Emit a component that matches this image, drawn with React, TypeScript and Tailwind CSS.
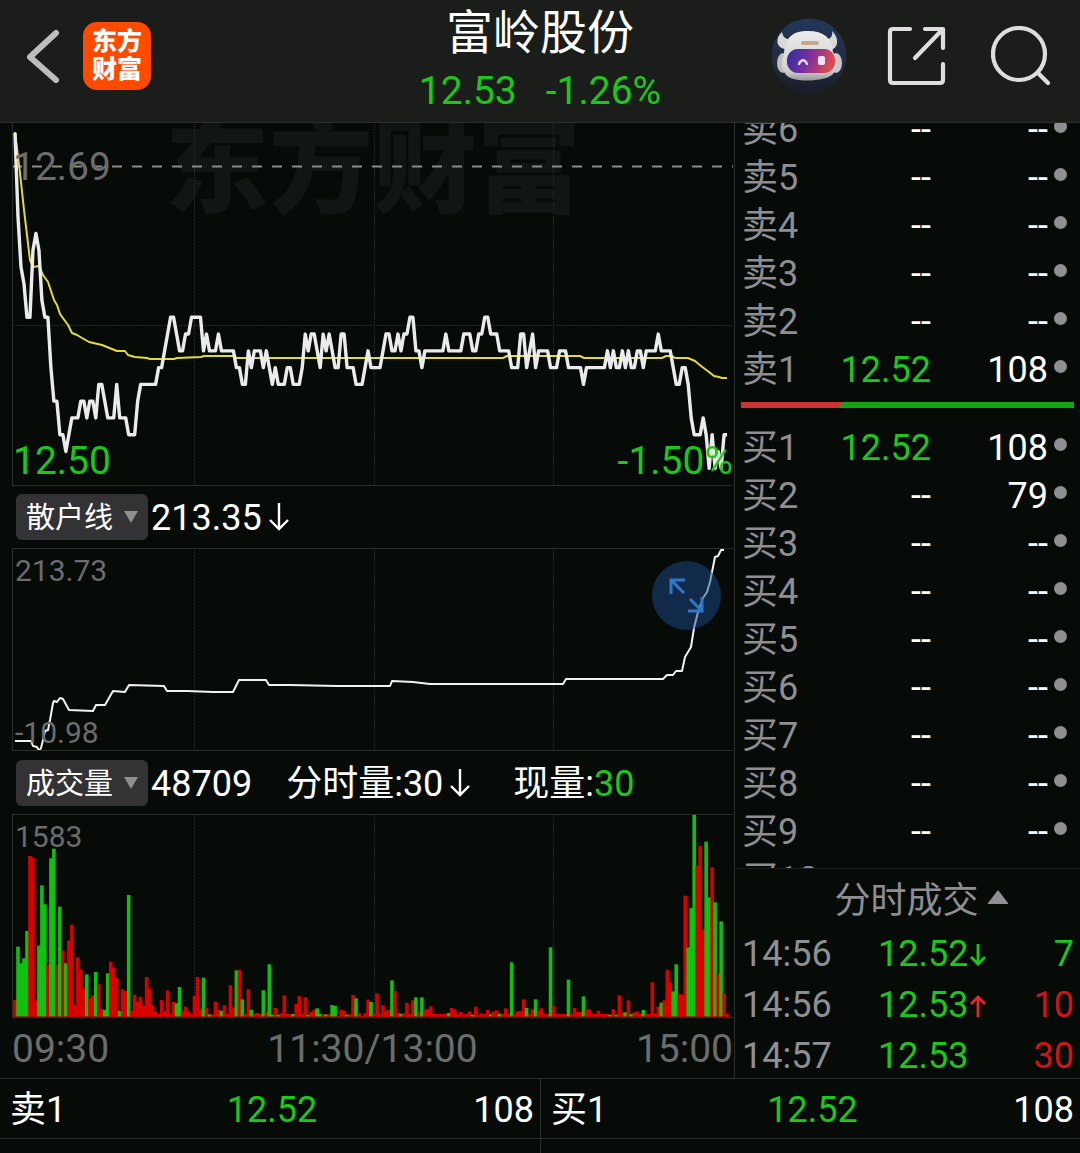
import type { ReactNode } from "react";

const STEP = 2.992;
const minuteX = (i: number) => 2 + i * STEP;

// Last price for each minute, in cents above 12.00
const prices = [
  71, 66, 63, 62, 60, 60, 64, 65, 64, 61, 60, 60, 57, 55, 55, 53, 53, 52, 53, 54,
  54, 54, 55, 55, 54, 55, 55, 54, 56, 56, 55, 54, 54, 54, 56, 54, 54, 54, 53, 53,
  53, 55, 56, 56, 56, 56, 56, 56, 57, 57, 58, 59, 60, 60, 59, 58, 58, 59, 59, 60,
  60, 60, 60, 58, 59, 58, 58, 58, 59, 58, 58, 58, 58, 58, 57, 57, 56, 56, 58, 57,
  58, 58, 58, 57, 58, 57, 56, 57, 56, 56, 56, 57, 57, 56, 56, 56, 57, 59, 58, 59,
  59, 58, 57, 59, 58, 59, 58, 57, 57, 59, 59, 57, 57, 57, 56, 56, 56, 57, 58, 57,
  57, 57, 57, 58, 59, 59, 58, 58, 59, 58, 59, 59, 60, 60, 58, 58, 57, 58, 58, 58,
  58, 58, 58, 58, 59, 58, 58, 58, 58, 58, 59, 59, 59, 58, 58, 59, 59, 60, 60, 59,
  59, 59, 58, 58, 58, 58, 57, 57, 57, 59, 59, 57, 58, 59, 57, 58, 58, 58, 58, 57,
  57, 57, 58, 58, 58, 57, 57, 57, 57, 57, 56, 57, 57, 57, 57, 57, 57, 57, 58, 57,
  58, 57, 57, 58, 57, 58, 57, 57, 58, 58, 57, 58, 58, 58, 58, 59, 58, 58, 58, 58,
  57, 56, 56, 57, 57, 56, 54, 53, 53, 53, 54, 53, 51, 53, 51, 52, 51, 53, 53,
];

// Volume for each minute, negative when the minute closed lower
const volumes = [
  51, -211, -161, -176, -258, 483, 478, 50, -214, -395, -338, 158, -476, -505,
  158, -331, 200, -161, 229, 277, 36, 179, 141, 86, -128, 56, 65, -135, 99, 24,
  -21, -131, 166, 149, 117, -18, 83, 78, -366, 19, 66, 47, 60, 33, 120, 86, 36,
  18, 9, 51, 18, 80, 9, 45, -41, -90, 18, 31, 16, 9, 64, 120, 23, -118, 28, -8,
  8, 46, 21, -19, 35, 9, 95, 29, -140, 142, -53, 9, 83, -22, 9, 12, 9, -80, 16,
  -158, -7, 27, -7, 11, 65, 9, 9, -9, 40, 62, 9, 59, -7, 15, 21, -26, -9, 9, -8,
  9, -36, -33, 3, 22, 19, -7, 9, 66, -56, 12, 3, 11, 52, -45, 9, 71, 8, 35, 18,
  22, -110, 78, 12, -10, 11, 43, 9, 50, -59, 17, -59, 22, 24, 32, 9, 9, 9, 9, 9,
  -12, 27, 23, 9, 15, 8, 9, 17, -7, 31, 8, 11, 9, 22, -8, 16, 20, -10, 9, 26, 9,
  -164, 9, 17, 18, 53, -27, 9, 23, -53, 19, 26, 9, 9, -209, 34, 9, 9, 9, 9, -112,
  9, 27, 15, 15, -62, 23, 23, 9, 9, 19, 9, 9, 9, -7, 24, -7, 65, 14, -14, 50, -9,
  14, 17, 9, -21, 9, 9, 104, 9, 31, -43, 50, 142, 104, -77, -158, 69, 67, 364,
  -209, -327, -606, 455, 513, 263, -526, -359, 449, -344, 131, -287, 73, 10,
];

const averageLine =
  "2,9 7,50 11,87 17,137 20,144 26,143 30,152 35,159 41,177 44,182 47,191 55,202 59,210 64,212 76,219 89,222 104,228 112,228 115,232 122,234 134,235 137,236 161,236 164,235 188,234 191,233 220,233 224,235 490,235 494,233 567,233 571,235 649,235 653,233 659,233 662,235 675,235 682,238 688,243 696,249 701,253 706,254 709,255 714,255";

const retailLine =
  "2,192 18,192 20,197 24,198 26,202 28,199 30,191 32,182 35,181 37,171 40,154 41,152 44,153 47,149 50,150 56,161 80,162 83,156 92,156 100,142 112,143 116,136 151,137 154,142 174,142 200,143 220,143 226,131 253,131 256,136 277,136 324,137 377,137 379,132 400,133 417,135 490,135 499,135 524,135 550,135 553,130 650,130 654,126 660,126 663,122 669,122 672,108 678,98 681,79 685,63 690,49 694,43 697,33 702,8 705,7 708,1 711,1";

const sells = [
  ["卖6", "--", "--"],
  ["卖5", "--", "--"],
  ["卖4", "--", "--"],
  ["卖3", "--", "--"],
  ["卖2", "--", "--"],
  ["卖1", "12.52", "108"],
];

const buys = [
  ["买1", "12.52", "108"],
  ["买2", "--", "79"],
  ["买3", "--", "--"],
  ["买4", "--", "--"],
  ["买5", "--", "--"],
  ["买6", "--", "--"],
  ["买7", "--", "--"],
  ["买8", "--", "--"],
  ["买9", "--", "--"],
  ["买10", "--", "--"],
];

const trades = [
  { time: "14:56", price: "12.52", dir: "down", qty: "7", color: "text-[#1ac81a]" },
  { time: "14:56", price: "12.53", dir: "up", qty: "10", color: "text-[#d01414]" },
  { time: "14:57", price: "12.53", dir: "", qty: "30", color: "text-[#d01414]" },
];

function Grid({ height }: { height: number }) {
  return (
    <g stroke="#242725" strokeWidth="1" strokeDasharray="2 1">
      {[181.5, 361.5, 540.5].map((x) => (
        <line key={x} x1={x} x2={x} y1="0" y2={height} />
      ))}
    </g>
  );
}

function Arrow({ className }: { className: string }) {
  return (
    <svg viewBox="0 0 20 30" className={className} fill="none" stroke="currentColor" strokeWidth="2.4">
      <path d="M10 1V27M1 18L10 27L19 18" />
    </svg>
  );
}

function TickArrow({ up = false }: { up?: boolean }) {
  return (
    <svg
      viewBox="0 0 16 24"
      className={up ? "h-6 w-4 text-[#e02a2a]" : "h-6 w-4"}
      fill="none"
      stroke="currentColor"
      strokeWidth="2.8"
    >
      {up ? <path d="M8 23V3M1 10L8 3L15 10" /> : <path d="M8 1V21M1 14L8 21L15 14" />}
    </svg>
  );
}

function IndicatorSelect({ name, value }: { name: string; value: string }) {
  return (
    <div className="relative shrink-0">
      <select
        aria-label={name}
        defaultValue={value}
        className="block h-[46px] w-[132px] appearance-none rounded-md bg-[#333335] pt-[3px] pl-[10px] text-[29px] text-white"
      >
        <option>散户线</option>
        <option>成交量</option>
      </select>
      <svg viewBox="0 0 14 12" className="pointer-events-none absolute top-[17px] right-[10px] h-3 w-[14px]">
        <path d="M0 0H14L7 12Z" fill="#8e8e93" />
      </svg>
    </div>
  );
}

function BookTable({ label, rows }: { label: string; rows: string[][] }) {
  return (
    <table aria-label={label} className="w-full table-fixed border-collapse text-4xl">
      <tbody>
        {rows.map(([name, price, qty]) => (
          <tr key={name} className="h-12 leading-[46px]">
            <th className="w-[72px] p-0 pt-[2px] pl-[7px] text-left font-normal whitespace-nowrap text-[#8e8e93]">
              {name}
            </th>
            <td className={price === "--" ? "p-0 pt-[2px] text-right text-white" : "p-0 pt-[2px] text-right text-[#1ac81a]"}>
              {price}
            </td>
            <td className="w-[117px] p-0 pt-[2px] text-right text-white">{qty}</td>
            <td className="w-8 p-0 pb-[5px]">
              <span className="ml-[6px] block size-[13px] rounded-full bg-[#8e8e93]" />
            </td>
          </tr>
        ))}
      </tbody>
    </table>
  );
}

function QuoteCell({ side, children }: { side: string; children?: ReactNode }) {
  return (
    <div className="grid h-[59px] grid-cols-3 items-center pt-[3px] pr-[6px] pl-[10px] text-4xl">
      <span>{side}</span>
      <span className="text-center text-[#1ac81a]">12.52</span>
      <span className="text-right">{children}</span>
    </div>
  );
}

function Header() {
  return (
    <header className="grid h-[123px] grid-cols-[1fr_auto_1fr] border-b border-[#2c2e2c] bg-[#1a1d1a]">
      <div className="flex items-start pt-[22px] pl-[26px]">
        <button aria-label="返回" className="mt-[7px]">
          <svg viewBox="0 0 34 54" className="h-[54px] w-[34px]" fill="none" stroke="#bdbdbd" strokeWidth="6" strokeLinecap="round">
            <path d="M30 4L4 28L30 51" strokeLinejoin="round" />
          </svg>
        </button>
        <a
          href="#"
          aria-label="东方财富"
          className="ml-[23px] flex size-[68px] flex-col items-center justify-center rounded-[14px] bg-[#ff4a00] text-[25px] leading-[28px] font-black text-white"
        >
          <span>东方</span>
          <span>财富</span>
        </a>
      </div>
      <div className="text-center">
        <h1 className="pt-1 text-[47px] leading-[58px] text-white">富岭股份</h1>
        <p className="flex justify-center gap-[29px] text-[39px] leading-[58px] text-[#1ac81a]">
          <span>12.53</span>
          <span>-1.26%</span>
        </p>
      </div>
      <div className="flex items-start justify-end pt-[18px] pr-[29px]">
        <button aria-label="智能助手">
          <svg viewBox="0 0 76 76" className="size-[76px]">
            <defs>
              <linearGradient id="sky" x1="0" y1="0" x2="0" y2="1">
                <stop offset="0" stopColor="#22375a" />
                <stop offset="0.6" stopColor="#232b3e" />
                <stop offset="1" stopColor="#181c2a" />
              </linearGradient>
              <linearGradient id="visor" x1="0" y1="0" x2="1" y2="0.2">
                <stop offset="0" stopColor="#2a2f9c" />
                <stop offset="0.5" stopColor="#7b2f9e" />
                <stop offset="1" stopColor="#dc4a50" />
              </linearGradient>
              <linearGradient id="shell" x1="0" y1="0" x2="0" y2="1">
                <stop offset="0" stopColor="#ececec" />
                <stop offset="0.8" stopColor="#d2d0d0" />
                <stop offset="1" stopColor="#9a9698" />
              </linearGradient>
            </defs>
            <circle cx="38" cy="38" r="37.5" fill="url(#sky)" />
            <path d="M11 14C4 20 5 30 14 31L22 21C14 22 12 19 11 14Z" fill="#d8d8da" />
            <path d="M61 13C68 19 68 30 60 32L53 21C60 22 62 18 61 13Z" fill="#d8d8da" />
            <ellipse cx="12" cy="45" rx="6" ry="10" fill="#bdbcc0" />
            <ellipse cx="65" cy="45" rx="6" ry="10" fill="#c9c7ca" />
            <path d="M13 36C14 20 21 13 37 13C53 13 61 20 62 34C67 42 67 50 62 56C55 64 22 65 15 57C10 50 10 42 13 36Z" fill="url(#shell)" />
            <rect x="30" y="23" width="18" height="4" rx="2" fill="#c9a58a" />
            <rect x="16" y="31" width="48" height="24" rx="11" fill="url(#visor)" />
            <path d="M28 46C30 41 34 41 36 46" fill="none" stroke="#dcdcf4" strokeWidth="2.4" strokeLinecap="round" />
            <rect x="47" y="38" width="7" height="9" rx="2" fill="#f0e4f4" />
          </svg>
        </button>
        <button aria-label="分享" className="mt-2 ml-10">
          <svg viewBox="0 0 60 60" className="size-[60px]" fill="none" stroke="#dedede" strokeWidth="4.2" strokeLinecap="round" strokeLinejoin="round">
            <path d="M23 3H6Q3 3 3 6V54Q3 57 6 57H53Q56 57 56 54V38" />
            <path d="M38 3H56V22M55 4L28 32" />
          </svg>
        </button>
        <button aria-label="搜索" className="mt-2 ml-11">
          <svg viewBox="0 0 60 60" className="size-[60px]" fill="none" stroke="#dedede" strokeWidth="4.2" strokeLinecap="round">
            <circle cx="28" cy="28" r="26" />
            <path d="M47 47L57 57" />
          </svg>
        </button>
      </div>
    </header>
  );
}

function PriceChart() {
  const points = prices
    .map((p, i) => `${minuteX(i)},${194.3 + (60 - p) * 16.77}`)
    .join(" ");

  return (
    <div className="relative overflow-hidden border-b border-l border-[#2c2e2c] text-[39px] leading-none">
      <div className="absolute inset-x-0 -top-2 text-center text-[104px] leading-[110px] font-black text-[#111513]">
        东方财富
      </div>
      <svg viewBox="0 0 720 362" preserveAspectRatio="none" className="relative block h-[362px] w-full">
        <Grid height={362} />
        <line x1="0" x2="720" y1="202.5" y2="202.5" stroke="#242725" strokeDasharray="2 1" />
        <line x1="-1" x2="720" y1="43.5" y2="43.5" stroke="#8c8c8c" strokeWidth="2" strokeDasharray="10 10" />
        <polyline points={averageLine} fill="none" stroke="#e6d93c" strokeWidth="2" strokeLinejoin="round" />
        <polyline points={points} fill="none" stroke="#ebebeb" strokeWidth="3.4" strokeLinejoin="round" />
      </svg>
      <span className="absolute top-[25px] left-0 text-[#6c6c6c]">12.69</span>
      <span className="absolute bottom-1 left-0 text-[#1ac81a]">12.50</span>
      <span className="absolute right-0 bottom-1 text-[#1ac81a]">-1.50%</span>
    </div>
  );
}

function RetailChart() {
  return (
    <div className="relative border-y border-l border-[#2c2e2c] text-[30px] leading-none text-[#6c6c6c]">
      <svg viewBox="0 0 720 201" preserveAspectRatio="none" className="block h-[201px] w-full">
        <Grid height={201} />
        <polyline points={retailLine} fill="none" stroke="#f2f2f2" strokeWidth="2" strokeLinejoin="round" />
      </svg>
      <span className="absolute top-[7px] left-[2px]">213.73</span>
      <span className="absolute bottom-[2px] left-[2px]">-10.98</span>
      <button
        aria-label="放大"
        className="absolute top-3 right-3 size-[69px] rounded-full bg-[#1c4a8a]/50"
      >
        <svg viewBox="0 0 69 69" className="size-full" fill="none" stroke="#2f78c8" strokeWidth="3">
          <path d="M33 19H19V33M19 19L32 32" />
          <path d="M50 36V50H36M38 38L50 50" />
        </svg>
      </button>
    </div>
  );
}

function VolumeChart() {
  return (
    <div className="relative border-y border-l border-[#2c2e2c] text-[30px] leading-none text-[#6c6c6c]">
      <svg viewBox="0 0 720 202" preserveAspectRatio="none" className="block h-[202px] w-full">
        <Grid height={202} />
        {volumes.map((v, i) => (
          <rect
            key={i}
            x={minuteX(i) - 1.8}
            y={202 - Math.abs(v) / 3}
            width="3.6"
            height={Math.abs(v) / 3}
            fill={v > 0 ? "#f00000" : "#10d810"}
            opacity="0.88"
          />
        ))}
        <line x1="0" x2="714" y1="201.5" y2="201.5" stroke="#a00000" opacity="0.6" />
      </svg>
      <span className="absolute top-[7px] left-[2px]">1583</span>
    </div>
  );
}

function OrderBook() {
  return (
    <aside className="flex w-[346px] shrink-0 flex-col border-l border-[#2c2e2c]">
      <div className="h-0 grow overflow-hidden">
        <div className="-mt-[18px]">
          <BookTable label="卖盘" rows={sells} />
          <div className="px-[6px] pt-[9px] pb-[15px]">
            <svg viewBox="0 0 333 6" preserveAspectRatio="none" className="block h-[6px] w-full">
              <rect width="333" height="6" fill="#14a514" />
              <path d="M0 0H102L97 6H0Z" fill="#cc3333" />
            </svg>
          </div>
          <BookTable label="买盘" rows={buys} />
        </div>
      </div>
      <div className="-mb-1 border-t border-[#1c1f1d] text-4xl">
        <button className="flex h-[60px] w-full items-center justify-center gap-[9px] pt-1 pr-[1px] pl-7 text-[#8e8e93]">
          分时成交
          <svg viewBox="0 0 20 14" className="mb-[9px] h-[14px] w-5">
            <path d="M10 0L20 13V14H0V13Z" fill="#8e8e93" />
          </svg>
        </button>
        <table aria-label="分时成交" className="w-full table-fixed border-collapse">
          <tbody>
            {trades.map((t, i) => (
              <tr key={i} className="h-[51px] leading-[51px]">
                <td className="w-[104px] p-0 pl-[7px] text-[#8e8e93]">{t.time}</td>
                <td className="p-0 pl-[39px] text-[#1ac81a]">
                  <span className="flex items-center gap-[2px]">
                    {t.price}
                    {t.dir === "down" && <TickArrow />}
                    {t.dir === "up" && <TickArrow up />}
                  </span>
                </td>
                <td className={`w-20 p-0 pr-[6px] text-right ${t.color}`}>{t.qty}</td>
              </tr>
            ))}
          </tbody>
        </table>
      </div>
    </aside>
  );
}

export default function App() {
  return (
    <div className="flex min-h-screen flex-col bg-[#060b08] font-[Roboto,'Noto_Sans_CJK_SC',sans-serif] text-white">
      <Header />
      <main className="flex">
        <section className="min-w-0 flex-1 pr-[1px] pl-3">
          <PriceChart />
          <div className="flex h-[62px] items-center gap-[3px] pl-1 text-4xl">
            <IndicatorSelect name="副图指标一" value="散户线" />
            <span className="pt-[2px]">213.35</span>
            <Arrow className="ml-1 h-[30px] w-5" />
          </div>
          <RetailChart />
          <div className="flex h-[63px] items-center gap-[3px] pl-1 text-4xl">
            <IndicatorSelect name="副图指标二" value="成交量" />
            <span className="pt-[3px]">48709</span>
            <span className="ml-[31px] pt-[3px]">分时量:30</span>
            <Arrow className="ml-1 h-[30px] w-5" />
            <span className="ml-10 pt-[3px]">
              现量:<span className="text-[#1ac81a]">30</span>
            </span>
          </div>
          <VolumeChart />
          <div className="flex h-[60px] items-center justify-between pt-[2px] text-[39px] text-[#6c6c6c]">
            <span>09:30</span>
            <span>11:30/13:00</span>
            <span>15:00</span>
          </div>
        </section>
        <OrderBook />
      </main>
      <footer className="grid grow grid-cols-2 border-t border-[#2c2e2c]">
        <div>
          <QuoteCell side="卖1">108</QuoteCell>
          <div className="border-t border-[#2c2e2c]" />
        </div>
        <div className="border-l border-[#2c2e2c]">
          <QuoteCell side="买1">108</QuoteCell>
          <div className="border-t border-[#2c2e2c]" />
        </div>
      </footer>
    </div>
  );
}
